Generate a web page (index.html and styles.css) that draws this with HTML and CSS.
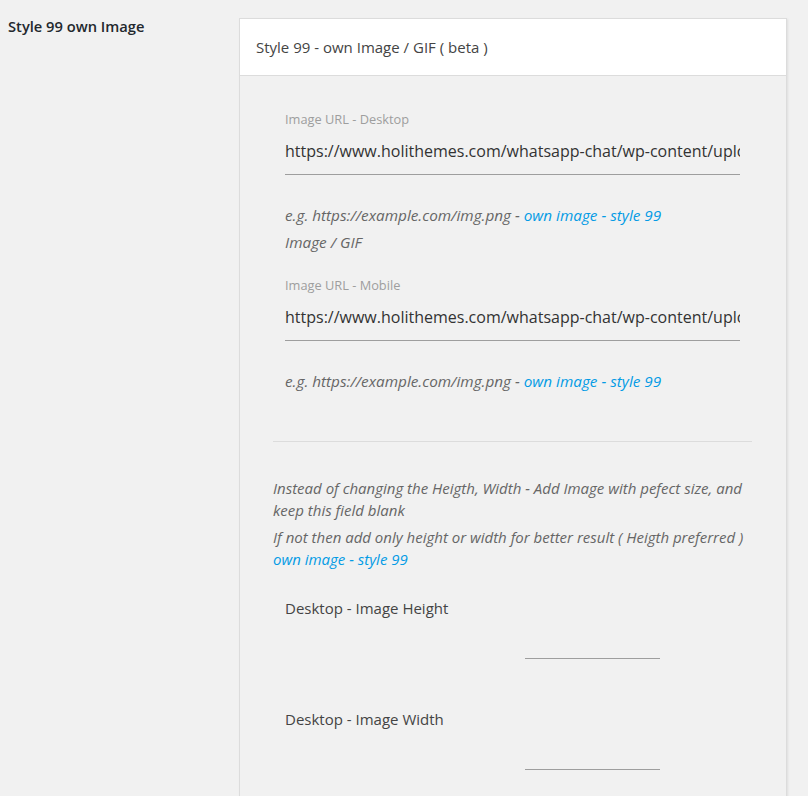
FILE: index.html
```html
<!DOCTYPE html>
<html lang="en">
<head>
<meta charset="utf-8">
<title>Style 99 own Image</title>
<link rel="stylesheet" href="styles.css">
</head>
<body>
<div class="form-row">
  <div class="row-label">Style 99 own Image</div>
  <div class="card">
    <div class="card-header">Style 99 - own Image / GIF ( beta )</div>
    <div class="card-body">
      <div class="field">
        <label class="field-label">Image URL - Desktop</label>
        <div class="text-input">https://www.holithemes.com/whatsapp-chat/wp-content/uploads/2020/03/ht-ctc-s99-desktop.gif</div>
        <p class="hint">e.g. https://example.com/img.png - <a class="link" href="#">own image - style 99</a></p>
        <p class="hint">Image / GIF</p>
      </div>
      <div class="field field-mobile">
        <label class="field-label">Image URL - Mobile</label>
        <div class="text-input">https://www.holithemes.com/whatsapp-chat/wp-content/uploads/2020/03/ht-ctc-s99-mobile.gif</div>
        <p class="hint">e.g. https://example.com/img.png - <a class="link" href="#">own image - style 99</a></p>
      </div>
      <hr class="divider">
      <p class="note">Instead of changing the Heigth, Width - Add Image with pefect size, and keep this field blank</p>
      <p class="note">If not then add only height or width for better result ( Heigth preferred ) <a class="link" href="#">own image - style 99</a></p>
      <div class="size-row">
        <div class="size-label">Desktop - Image Height</div>
        <div class="size-input"></div>
      </div>
      <div class="size-row">
        <div class="size-label">Desktop - Image Width</div>
        <div class="size-input"></div>
      </div>
    </div>
  </div>
</div>
</body>
</html>
```
FILE: styles.css
```css
html, body {
  margin: 0;
  padding: 0;
  background: #f1f1f1;
  font-family: "Open Sans", "Noto Sans", sans-serif;
  color: #444;
  font-size: 15px;
}

.form-row {
  display: grid;
  grid-template-columns: 239px 548px;
  padding-top: 18px;
}

.row-label {
  padding-left: 8px;
  font-weight: 600;
  color: #23282d;
  font-size: 14.7px;
  line-height: 16px;
}

.card {
  border: 1px solid #dcdcdc;
  border-bottom: none;
  box-shadow: 1px 1px 2px rgba(0, 0, 0, 0.08);
  background: #f1f1f1;
  min-height: 800px;
}

.card-header {
  background: #fff;
  height: 56px;
  line-height: 56px;
  padding-left: 16px;
  border-bottom: 1px solid #dcdcdc;
  color: #444;
  font-size: 15px;
}

.card-body {
  padding: 35px 34px 0 33px;
}

.field {
  padding: 0 12px;
}

.field-mobile {
  margin-top: 24px;
}

.field-label {
  display: block;
  font-size: 12.8px;
  line-height: 16px;
  color: #9e9e9e;
}

.text-input {
  margin-top: 13px;
  font-size: 16px;
  line-height: 22px;
  color: #333;
  white-space: nowrap;
  overflow: hidden;
  padding-bottom: 12px;
  border-bottom: 1px solid #9e9e9e;
}

.hint {
  margin: 29px 0 0;
  font-style: italic;
  font-size: 15.3px;
  line-height: 22px;
  color: #666;
}

.hint + .hint {
  margin-top: 5px;
}

.link {
  color: #039be5;
  text-decoration: none;
}

.divider {
  margin: 49px 0 0;
  border: 0;
  border-top: 1px solid #dcdcdc;
  height: 0;
}

.note {
  margin: 35px 0 0;
  font-style: italic;
  font-size: 15px;
  line-height: 22px;
  color: #666;
}

.note + .note {
  margin-top: 5px;
}

.size-row {
  display: grid;
  grid-template-columns: 240px 135px;
  padding-left: 12px;
  height: 111px;
}

.note + .size-row {
  margin-top: 27px;
}

.size-label {
  color: #444;
  line-height: 22px;
  font-size: 15px;
}

.size-input {
  height: 61px;
  border-bottom: 1px solid #9e9e9e;
}
```
